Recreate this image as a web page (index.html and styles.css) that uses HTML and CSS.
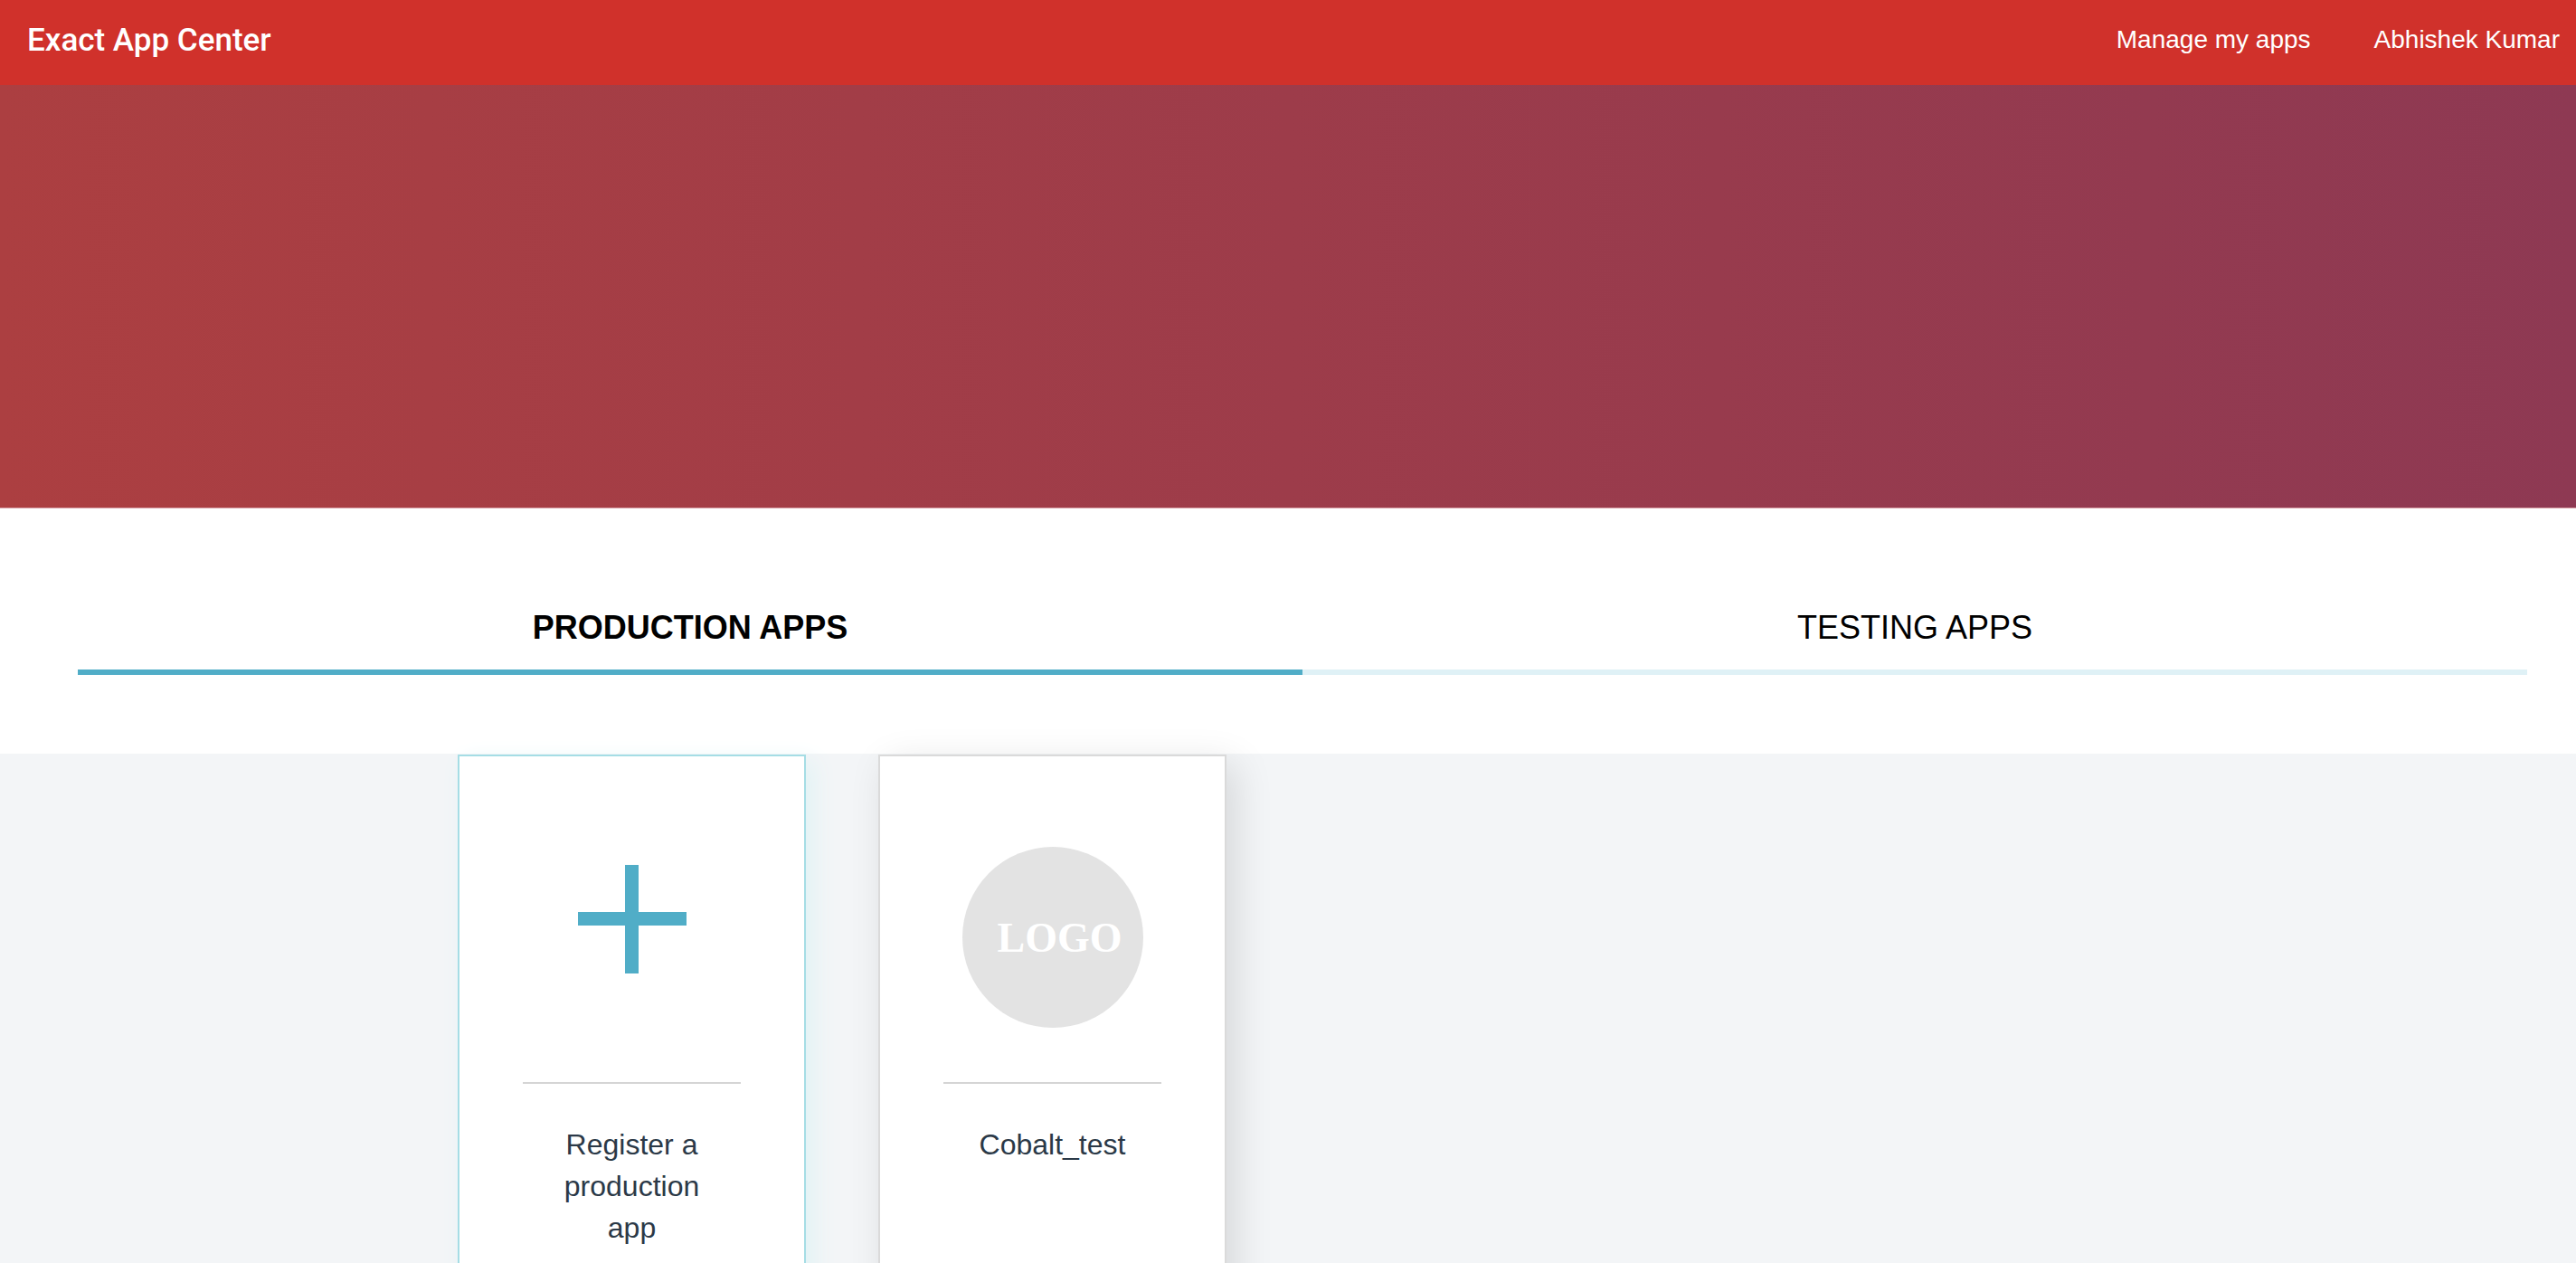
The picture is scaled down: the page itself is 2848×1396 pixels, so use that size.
FILE: index.html
```html
<!DOCTYPE html>
<html lang="en">
<head>
    <meta charset="UTF-8">
    <meta name="viewport" content="width=device-width, initial-scale=1.0">
    <title>Exact App Center</title>
    <link rel="stylesheet" href="styles.css">
</head>
<body>
    <header class="topbar">
        <a class="brand" href="#">Exact App Center</a>
        <nav class="topnav">
            <a href="#">Manage my apps</a>
            <a href="#">Abhishek Kumar</a>
        </nav>
    </header>

    <div class="banner"></div>

    <!-- Tabs -->
    <div class="tabs">
        <button class="tab active" type="button">PRODUCTION APPS</button>
        <button class="tab" type="button">TESTING APPS</button>
    </div>

    <!-- App cards -->
    <main class="apps">
        <a class="card register" href="#">
            <div class="card-icon">
                <svg class="plus" viewBox="0 0 120 120">
                    <path d="M52 0h15v52h53v15H67v53H52V67H0V52h52z"/>
                </svg>
            </div>
            <p>Register a production app</p>
        </a>
        <a class="card" href="#">
            <div class="card-icon">
                <span class="logo">LOGO</span>
            </div>
            <p>Cobalt_test</p>
        </a>
    </main>
</body>
</html>
```
FILE: styles.css
```css
* {
    box-sizing: border-box;
}

body {
    margin: 0;
    height: 100vh;
    overflow: hidden;
    background-color: #f3f5f7;
    font-family: "Liberation Sans", Arial, sans-serif;
    color: #2b3947;
}

a {
    color: inherit;
    text-decoration: none;
}

.topbar {
    display: flex;
    justify-content: space-between;
    align-items: center;
    height: 94px;
    padding: 0 18px 6px 30px;
    background-color: #d0312b;
    color: #fff;
}

.brand {
    font-family: Roboto, sans-serif;
    font-size: 35px;
    font-weight: 500;
}

.topnav {
    display: flex;
    gap: 70px;
    font-size: 28px;
}

.banner {
    height: 468px;
    border-bottom: 1px solid #d9a3a9;
    background: linear-gradient(90deg, #ac3f41, #8e3953);
}

.tabs {
    display: flex;
    padding: 94px 54px 87px 86px;
    background-color: #fff;
}

.tab {
    flex: 1;
    height: 90px;
    padding: 0 0 8px;
    border: none;
    border-bottom: 6px solid #dff1f6;
    background: none;
    font-family: inherit;
    font-size: 36px;
    color: #000;
    cursor: pointer;
}

.tab.active {
    border-color: #50adc7;
    font-weight: bold;
}

.apps {
    display: flex;
    gap: 80px;
    padding: 1px 0 0 506px;
}

.card {
    width: 385px;
    height: 620px;
    padding: 0 70px;
    border: 2px solid #dadada;
    background-color: #fff;
    box-shadow: 10px 10px 40px rgba(0, 0, 0, 0.12);
    text-align: center;
}

.card.register {
    border-color: #a5dde5;
    box-shadow: 8px 8px 24px #e0f3f5;
}

.card-icon {
    display: flex;
    justify-content: center;
    align-items: center;
    height: 362px;
    border-bottom: 2px solid #d5d5d5;
}

.plus {
    width: 120px;
    fill: #50adc7;
}

.logo {
    display: flex;
    justify-content: center;
    align-items: center;
    width: 200px;
    height: 200px;
    margin-top: 40px;
    padding-left: 16px;
    border-radius: 50%;
    background-color: #e3e3e3;
    color: #fff;
    font-family: Georgia, "Liberation Serif", serif;
    font-size: 46px;
    font-weight: bold;
}

.card p {
    margin: 44px 30px 0;
    font-size: 32px;
    line-height: 46px;
}
```
